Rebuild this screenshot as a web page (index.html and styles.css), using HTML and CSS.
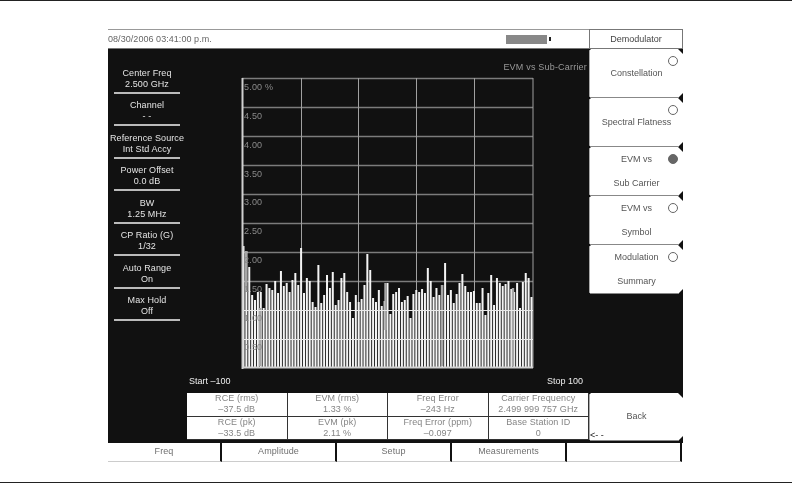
FILE: index.html
```html
<!DOCTYPE html>
<html lang="en">
<head>
<meta charset="utf-8">
<title>Demodulator - EVM vs Sub-Carrier</title>
<link rel="stylesheet" href="styles.css">
</head>
<body>
<div class="page">
  <div class="device">
    <div class="main">
      <div class="status">
        <span class="date">08/30/2006 03:41:00 p.m.</span>
        <span class="battery"><i class="cell"></i><i class="nub"></i></span>
      </div>
      <div class="screen">
        <div class="params">
          <div class="param"><span>Center Freq</span><span>2.500 GHz</span></div>
          <div class="param"><span>Channel</span><span>- -</span></div>
          <div class="param"><span>Reference Source</span><span>Int Std Accy</span></div>
          <div class="param"><span>Power Offset</span><span>0.0 dB</span></div>
          <div class="param"><span>BW</span><span>1.25 MHz</span></div>
          <div class="param"><span>CP Ratio (G)</span><span>1/32</span></div>
          <div class="param"><span>Auto Range</span><span>On</span></div>
          <div class="param"><span>Max Hold</span><span>Off</span></div>
        </div>
        <div class="plot-area">
          <div class="plot-title">EVM vs Sub-Carrier</div>
          <div class="plot">
            <svg class="chart" width="293" height="292" viewBox="241 77 293 292">
              <path class="grid-h" d="M242 78.5H533M242 107.5H533M242 136.5H533M242 165.5H533M242 194.5H533M242 223.5H533M242 252.5H533M242 281.5H533"/>
              <path class="grid-v" d="M301.5 78V368M358.5 78V368M416.5 78V368M474.5 78V368M533 78V368"/>
              <path class="bars" d="M243.5 368V246V368m2.88 0V251V368m2.88 0V267V368m2.88 0V295V368m2.88 0V300V368m2.88 0V292V368m2.88 0V292V368m2.88 0V308V368m2.88 0V284V368m2.88 0V288V368m2.88 0V290V368m2.88 0V281V368m2.88 0V293V368m2.88 0V271V368m2.88 0V286V368m2.88 0V283V368m2.88 0V292V368m2.88 0V280V368m2.88 0V273V368m2.88 0V285V368m2.88 0V248V368m2.88 0V293V368m2.88 0V278V368m2.88 0V281V368m2.88 0V302V368m2.88 0V307V368m2.88 0V265V368m2.88 0V303V368m2.88 0V295V368m2.88 0V275V368m2.88 0V288V368m2.88 0V272V368m2.88 0V305V368m2.88 0V300V368m2.88 0V278V368m2.88 0V273V368m2.88 0V292V368m2.88 0V302V368m2.88 0V318V368m2.88 0V295V368m2.88 0V302V368m2.88 0V299V368m2.88 0V285V368m2.88 0V254V368m2.88 0V270V368m2.88 0V298V368m2.88 0V302V368m2.88 0V290V368m2.88 0V306V368m2.88 0V301V368m2.88 0V283V368m2.88 0V314V368m2.88 0V294V368m2.88 0V292V368m2.88 0V288V368m2.88 0V302V368m2.88 0V300V368m2.88 0V296V368m2.88 0V318V368m2.88 0V294V368m2.88 0V290V368m2.88 0V292V368m2.88 0V289V368m2.88 0V293V368m2.88 0V268V368m2.88 0V281V368m2.88 0V297V368m2.88 0V288V368m2.88 0V295V368m2.88 0V285V368m2.88 0V263V368m2.88 0V295V368m2.88 0V290V368m2.88 0V303V368m2.88 0V294V368m2.88 0V283V368m2.88 0V274V368m2.88 0V286V368m2.88 0V292V368m2.88 0V292V368m2.88 0V291V368m2.88 0V303V368m2.88 0V303V368m2.88 0V288V368m2.88 0V315V368m2.88 0V293V368m2.88 0V275V368m2.88 0V305V368m2.88 0V278V368m2.88 0V283V368m2.88 0V286V368m2.88 0V284V368m2.88 0V281V368m2.88 0V289V368m2.88 0V292V368m2.88 0V283V368m2.88 0V308V368m2.88 0V282V368m2.88 0V273V368m2.88 0V278V368m2.88 0V297V368"/>
              <path class="bars-dim" d="M260 308V366M442 285V366M513 288V366M385.5 283V330M246 251V290"/>
              <path class="grid-low" d="M242 310.5H533M242 339.5H533"/>
              <path class="axes" d="M242.5 78V369M242 367.5H533"/>
            </svg>
            <span class="tick t0">5.00 %</span>
            <span class="tick t1">4.50</span>
            <span class="tick t2">4.00</span>
            <span class="tick t3">3.50</span>
            <span class="tick t4">3.00</span>
            <span class="tick t5">2.50</span>
            <span class="tick t6">2.00</span>
            <span class="tick t7">1.50</span>
            <span class="tick t8">1.00</span>
            <span class="tick t9">0.50</span>
          </div>
          <div class="range"><span>Start &#8211;100</span><span>Stop 100</span></div>
        </div>
      </div>
      <div class="table">
        <div class="cell-box"><span>RCE (rms)</span><span>&#8211;37.5 dB</span></div>
        <div class="cell-box"><span>EVM (rms)</span><span>1.33 %</span></div>
        <div class="cell-box"><span>Freq Error</span><span>&#8211;243 Hz</span></div>
        <div class="cell-box"><span>Carrier Frequency</span><span>2.499 999 757 GHz</span></div>
        <div class="cell-box"><span>RCE (pk)</span><span>&#8211;33.5 dB</span></div>
        <div class="cell-box"><span>EVM (pk)</span><span>2.11 %</span></div>
        <div class="cell-box"><span>Freq Error (ppm)</span><span>&#8211;0.097</span></div>
        <div class="cell-box"><span>Base Station ID</span><span>0</span></div>
      </div>
    </div>
    <div class="keys">
      <div class="keys-title">Demodulator</div>
      <div class="key single"><span class="radio"></span><span class="key-label">Constellation</span></div>
      <div class="key single"><span class="radio"></span><span class="key-label">Spectral Flatness</span></div>
      <div class="key double"><span class="radio on"></span><span class="key-label">EVM vs</span><span class="key-label">Sub Carrier</span></div>
      <div class="key double"><span class="radio"></span><span class="key-label">EVM vs</span><span class="key-label">Symbol</span></div>
      <div class="key double"><span class="radio"></span><span class="key-label">Modulation</span><span class="key-label">Summary</span></div>
      <div class="keys-gap"></div>
      <div class="key back"><span class="key-label">Back</span><span class="arrow">&lt;- -</span></div>
    </div>
  </div>
  <div class="menu">
    <div class="menu-item">Freq</div>
    <div class="menu-item">Amplitude</div>
    <div class="menu-item">Setup</div>
    <div class="menu-item">Measurements</div>
    <div class="menu-item"></div>
  </div>
</div>
</body>
</html>
```
FILE: styles.css
```css
* { box-sizing: border-box; }
html, body { margin: 0; padding: 0; background: #fff; }
body { font-family: "Liberation Sans", Arial, sans-serif; font-size: 9px; overflow: hidden; }
.page {
  width: 792px; height: 483px; padding: 28px 0 0 108px;
  border-bottom: 1px solid #222; border-top: 1px solid #222;
  filter: blur(0.35px);
}
.device { display: flex; width: 575px; height: 414px; background: #111; }
.main { width: 481px; display: flex; flex-direction: column; }
.status {
  height: 20px; background: #fff; border-top: 1px solid #999; border-bottom: 1px solid #777;
  display: flex; align-items: center; justify-content: space-between;
  color: #666; letter-spacing: 0.05px;
}
.battery { display: flex; align-items: center; gap: 2px; margin-right: 38px; }
.cell { display: block; width: 41px; height: 9px; background: #888; }
.nub { display: block; width: 2px; height: 4px; background: #222; }
.screen { display: flex; height: 344px; color: #e4e4e4; }
.params { width: 79px; padding-top: 12px; }
.param {
  height: 32.5px; margin: 0 7px 0 6px; border-bottom: 2px solid #bbb;
  display: flex; flex-direction: column; align-items: center; justify-content: flex-end;
  line-height: 11px; padding-bottom: 2px; white-space: nowrap; letter-spacing: 0.1px;
}
.plot-area { flex: 1; padding-left: 54px; position: relative; }
.plot-title {
  position: absolute; right: 2px; top: 13px; color: #999; letter-spacing: 0.2px; line-height: 11px;
}
.plot { position: relative; width: 293px; height: 292px; margin-top: 28px; }
.chart { display: block; }
.bars { stroke: #f4f4f4; stroke-width: 2; fill: none; }
.bars-dim { stroke: #a6a6a6; stroke-width: 2.4; fill: none; }
.grid-h { stroke: #7c7c7c; stroke-width: 1.4; fill: none; }
.grid-v { stroke: #a0a0a0; stroke-width: 1; fill: none; }
.grid-low { stroke: #e8e8e8; stroke-width: 1; fill: none; }
.axes { stroke: #d0d0d0; stroke-width: 2; fill: none; }
.tick { position: absolute; left: 3px; color: #8a8a8a; line-height: 11px; letter-spacing: 0.2px; }
.t0 { top: 5px; } .t1 { top: 34px; } .t2 { top: 63px; } .t3 { top: 92px; }
.t4 { top: 120px; } .t5 { top: 149px; } .t6 { top: 178px; }
.t7 { top: 207px; } .t8 { top: 236px; } .t9 { top: 265px; }
.range {
  display: flex; justify-content: space-between; color: #eee; line-height: 11px;
  margin: 7px 6px 0 -52px;
}
.table {
  display: grid; grid-template-columns: repeat(4, 100.5px); grid-template-rows: 24px 23px;
  margin-left: 79px; width: 402px; background: #222;
}
.cell-box {
  background: #fff; color: #858585; border: 1px solid #333; border-width: 0 1px 1px 0;
  display: flex; flex-direction: column; align-items: center; line-height: 11px;
  letter-spacing: 0.1px; white-space: nowrap;
}
.keys { width: 94px; display: flex; flex-direction: column; }
.keys-title {
  height: 20px; background: #fff; border: 1px solid #777;
  text-align: center; line-height: 18px; color: #444;
}
.key {
  position: relative; height: 49px; background: #fff; color: #555; text-align: center;
  border-left: 1px solid #aaa; border-bottom: 1px solid #888;
  clip-path: polygon(2px 0, calc(100% - 5px) 0, 100% 5px, 100% calc(100% - 5px), calc(100% - 5px) 100%, 2px 100%, 0 calc(100% - 2px), 0 2px);
  flex: none;
}
.key-label { display: block; line-height: 11px; }
.radio {
  position: absolute; right: 5px; top: 7px; width: 10px; height: 10px; border-radius: 50%;
  border: 1px solid #666; background: #fff;
}
.radio.on { background: #666; }
.single .key-label { padding-top: 19px; }
.double { padding-top: 6.5px; }
.double .key-label + .key-label { margin-top: 13px; }
.keys-gap { height: 99px; flex: none; }
.back { height: 48px; }
.back .key-label { padding-top: 18px; }
.arrow { position: absolute; left: 0; bottom: 0; line-height: 9px; color: #222; }
.menu {
  display: grid; grid-template-columns: 114px repeat(4, 115px); width: 574px;
  height: 19px; background: #fff;
}
.menu-item {
  height: 19px; line-height: 17px; color: #707070; text-align: center;
  border-right: 2px solid #111; border-bottom: 1px solid #ccc; letter-spacing: 0.1px;
}
```
